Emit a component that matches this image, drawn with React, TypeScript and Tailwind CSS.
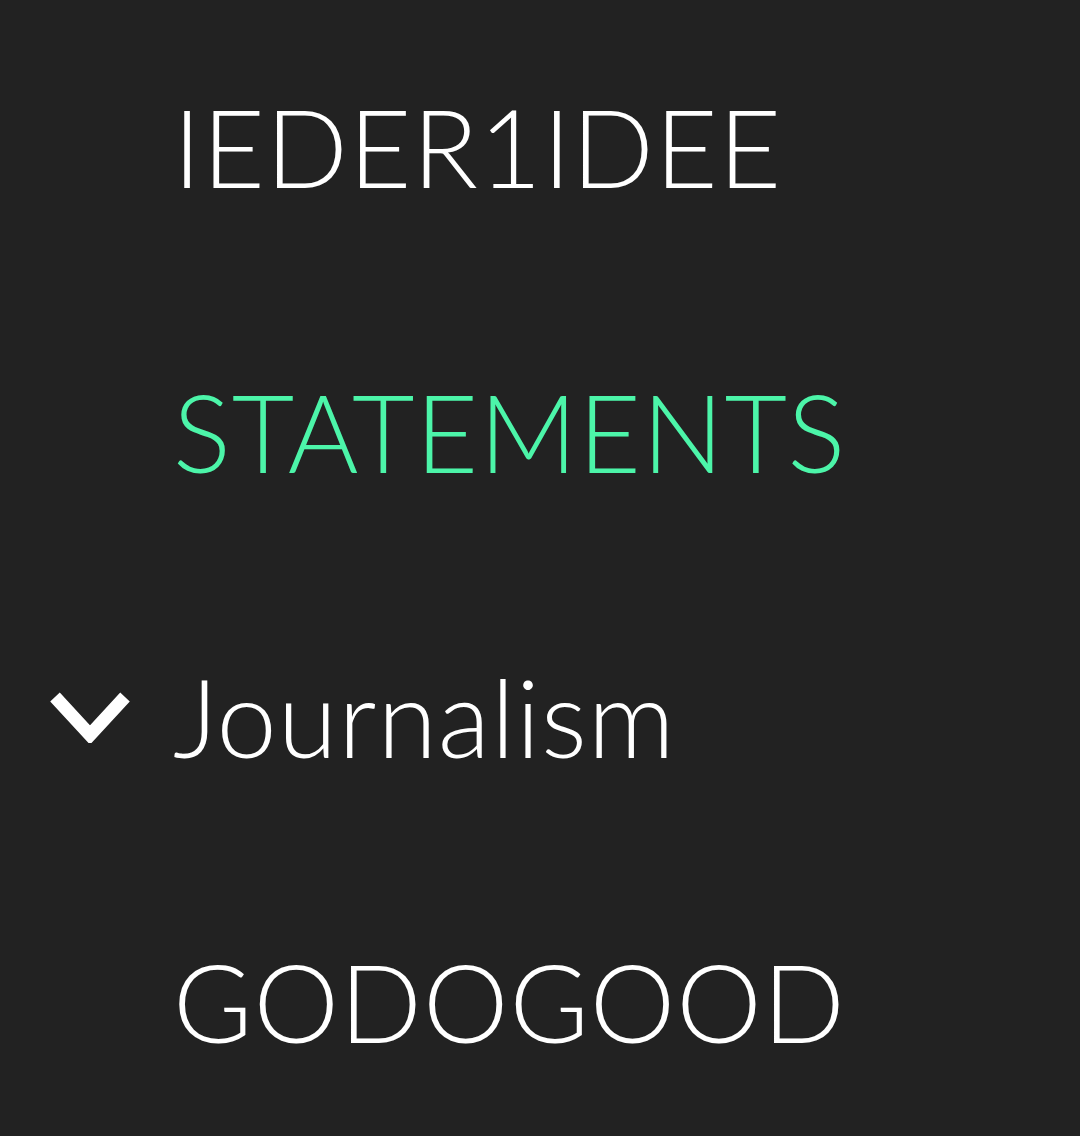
import React from "react";

const items = [
  { label: "IEDER1IDEE", color: "text-white", chevron: false },
  { label: "STATEMENTS", color: "text-[#4cf5a9]", chevron: false },
  { label: "Journalism", color: "text-white", chevron: true },
  { label: "GODOGOOD", color: "text-white", chevron: false },
];

export default function App() {
  return (
    <div
      className="w-[1080px] h-[1136px] bg-[#222222] overflow-hidden pt-[80px]"
      style={{ fontFamily: "Lato, 'Noto Sans', sans-serif" }}
    >
      <ul className="flex flex-col gap-[152px]">
        {items.map((it) => (
          <li key={it.label} className="flex items-center h-[133px]">
            <div className="w-[173px] pl-[50px] flex items-center">
              {it.chevron && (
                <svg width="80" height="52" viewBox="0 0 80 52">
                  <polyline
                    points="5,6 40,44 75,6"
                    fill="none"
                    stroke="#ffffff"
                    strokeWidth="13"
                    strokeLinecap="butt"
                    strokeLinejoin="miter"
                  />
                </svg>
              )}
            </div>
            <span
              className={`text-[108px] leading-[133px] font-light tracking-[1px] ${it.color}`}
            >
              {it.label}
            </span>
          </li>
        ))}
      </ul>
    </div>
  );
}
